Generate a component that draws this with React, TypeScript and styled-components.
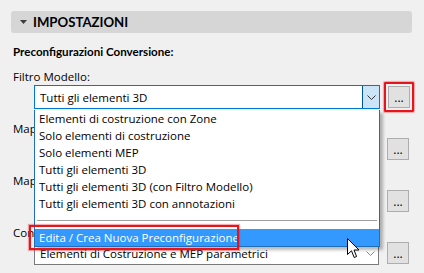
import styled, { createGlobalStyle } from 'styled-components'

const GlobalStyle = createGlobalStyle`
  html, body {
    margin: 0;
    padding: 0;
    background: #f0f0f0;
  }
  body {
    font-family: 'Open Sans', 'Noto Sans', sans-serif;
    font-size: 11.5px;
    color: #000;
  }
`

const Page = styled.div`
  position: relative;
  width: 424px;
  height: 273px;
  overflow: hidden;
  padding: 11px 12px 0 11px;
  box-sizing: border-box;
`

const SectionHeader = styled.div`
  display: flex;
  align-items: center;
  gap: 6px;
  height: 22px;
  padding-left: 9px;
  background: #d6d6d6;
  border-radius: 3px;
  font-family: 'Lato', 'Open Sans', sans-serif;
  font-weight: 700;
  font-size: 13.2px;
`

const Body = styled.div`
  padding: 11px 0 0 2px;
`

const Title = styled.div`
  font-family: 'Lato', 'Open Sans', sans-serif;
  font-weight: 700;
  font-size: 11.6px;
  line-height: 16px;
  margin-bottom: 9px;
`

const Field = styled.div`
  position: relative;
  height: 52px;
`

const Label = styled.div`
  line-height: 16px;
`

const ControlRow = styled.div`
  position: relative;
  display: flex;
  align-items: center;
  gap: 8px;
  margin-left: 21px;
  height: 24px;
`

const Combo = styled.div<{ $focused?: boolean }>`
  flex: 1;
  height: 24px;
  box-sizing: border-box;
  display: flex;
  align-items: center;
  background: #fff;
  border: 1px solid ${p => (p.$focused ? '#0078d7' : '#7a7a7a')};
`

const ComboText = styled.span`
  flex: 1;
  padding-left: 5px;
  white-space: nowrap;
  overflow: hidden;
`

const ComboArrow = styled.div<{ $focused?: boolean }>`
  width: 17px;
  height: 100%;
  box-sizing: border-box;
  display: flex;
  align-items: center;
  justify-content: center;
  background: ${p => (p.$focused ? '#cce4f7' : 'transparent')};
  border-left: 1px solid ${p => (p.$focused ? '#005499' : 'transparent')};
  color: ${p => (p.$focused ? '#333' : '#8a8a8a')};
`

const DotsButton = styled.div<{ $marked?: boolean }>`
  width: 22px;
  height: 22px;
  box-sizing: border-box;
  border: 1px solid #adadad;
  background: #e1e1e1;
  display: flex;
  align-items: flex-end;
  justify-content: center;
  padding-bottom: 4px;
  font-size: 12px;
  line-height: 10px;
  margin-right: ${p => (p.$marked ? 0 : 3)}px;
`

const Marked = styled.div`
  padding: 2px;
  margin: 0 -2px 0 -4px;
  border: 2px solid #e8141c;
  box-shadow: 0 0 1px 1px rgba(232, 20, 28, 0.35);
  border-radius: 1px;
  display: flex;
`

const Dropdown = styled.div`
  position: absolute;
  left: 0;
  top: 25px;
  width: 346px;
  box-sizing: border-box;
  background: #fff;
  border: 1px solid #1f6fb8;
  border-top: none;
  box-shadow: 3px 3px 3px rgba(0, 0, 0, 0.28);
  z-index: 5;
`

const Item = styled.div<{ $active?: boolean }>`
  position: relative;
  height: 17px;
  line-height: 17px;
  padding-left: 4px;
  white-space: nowrap;
  background: ${p => (p.$active ? '#3399ff' : 'transparent')};
  color: ${p => (p.$active ? '#fff' : '#000')};
`

const Separator = styled.div`
  height: 17px;
  display: flex;
  align-items: center;
  padding: 0 2px;

  &::after {
    content: '';
    flex: 1;
    height: 1px;
    background: #a0a0a0;
  }
`

const ItemMark = styled.div`
  position: absolute;
  left: -6px;
  top: -4px;
  width: 210px;
  height: 25px;
  box-sizing: border-box;
  border: 2px solid #e8141c;
  box-shadow: 0 0 1px 1px rgba(232, 20, 28, 0.35);
`

const Cursor = styled.svg`
  position: absolute;
  left: 347px;
  top: 238px;
  z-index: 10;
`

const Chevron = () => (
  <svg width="9" height="5" viewBox="0 0 9 5">
    <path d="M0.5 0.5 L4.5 4.5 L8.5 0.5" fill="none" stroke="currentColor" strokeWidth="1" />
  </svg>
)

const Triangle = () => (
  <svg width="7" height="4" viewBox="0 0 7 4">
    <path d="M0 0 H7 L3.5 4 Z" fill="#3c3c3c" />
  </svg>
)

const items = [
  'Elementi di costruzione con Zone',
  'Solo elementi di costruzione',
  'Solo elementi MEP',
  'Tutti gli elementi 3D',
  'Tutti gli elementi 3D (con Filtro Modello)',
  'Tutti gli elementi 3D con annotazioni',
]

export default function App() {
  return (
    <>
      <GlobalStyle />
      <Page>
        <SectionHeader>
          <Triangle />
          IMPOSTAZIONI
        </SectionHeader>
        <Body>
          <Title>Preconfigurazioni Conversione:</Title>

          <Field>
            <Label>Filtro Modello:</Label>
            <ControlRow>
              <Combo $focused>
                <ComboText>Tutti gli elementi 3D</ComboText>
                <ComboArrow $focused>
                  <Chevron />
                </ComboArrow>
              </Combo>
              <Marked>
                <DotsButton $marked>...</DotsButton>
              </Marked>
              <Dropdown>
                {items.map(t => (
                  <Item key={t}>{t}</Item>
                ))}
                <Separator />
                <Item $active>
                  Edita / Crea Nuova Preconfigurazione
                  <ItemMark />
                </Item>
              </Dropdown>
            </ControlRow>
          </Field>

          <Field>
            <Label>Mappatura Layer:</Label>
            <ControlRow>
              <Combo>
                <ComboText>Standard</ComboText>
                <ComboArrow>
                  <Chevron />
                </ComboArrow>
              </Combo>
              <DotsButton>...</DotsButton>
            </ControlRow>
          </Field>

          <Field>
            <Label>Mappatura Materiali:</Label>
            <ControlRow>
              <Combo>
                <ComboText>Standard</ComboText>
                <ComboArrow>
                  <Chevron />
                </ComboArrow>
              </Combo>
              <DotsButton>...</DotsButton>
            </ControlRow>
          </Field>

          <Field>
            <Label>Conversione Elementi:</Label>
            <ControlRow>
              <Combo>
                <ComboText>Elementi di Costruzione e MEP parametrici</ComboText>
                <ComboArrow>
                  <Chevron />
                </ComboArrow>
              </Combo>
              <DotsButton>...</DotsButton>
            </ControlRow>
          </Field>
        </Body>
        <Cursor width="13" height="21" viewBox="0 0 13 21">
          <path
            d="M0.5 0.5 L0.5 16.5 L4.5 12.8 L7.2 19.5 L9.6 18.5 L7 12 L12 12 Z"
            fill="#fff"
            stroke="#000"
            strokeWidth="1"
            strokeLinejoin="round"
          />
        </Cursor>
      </Page>
    </>
  )
}
